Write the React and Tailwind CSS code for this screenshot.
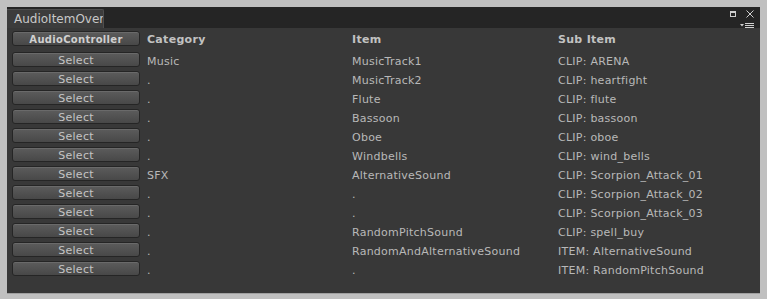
import React from "react";

const rows = [
  ["Music", "MusicTrack1", "CLIP: ARENA"],
  [".", "MusicTrack2", "CLIP: heartfight"],
  [".", "Flute", "CLIP: flute"],
  [".", "Bassoon", "CLIP: bassoon"],
  [".", "Oboe", "CLIP: oboe"],
  [".", "Windbells", "CLIP: wind_bells"],
  ["SFX", "AlternativeSound", "CLIP: Scorpion_Attack_01"],
  [".", ".", "CLIP: Scorpion_Attack_02"],
  [".", ".", "CLIP: Scorpion_Attack_03"],
  [".", "RandomPitchSound", "CLIP: spell_buy"],
  [".", "RandomAndAlternativeSound", "ITEM: AlternativeSound"],
  [".", ".", "ITEM: RandomPitchSound"],
];

function Btn({ children, bold }) {
  return (
    <div
      className={`self-start w-[128px] h-[15px] flex items-center justify-center rounded-[3px] border border-[#252525] bg-gradient-to-b from-[#5c5c5c] to-[#484848] shadow-[inset_0_1px_0_#6a6a6a] leading-none tracking-[0.3px] pt-[2px] ${
        bold ? "font-bold text-[10px] text-[#d0d0d0]" : "text-[11px] text-[#c4c4c4] -mt-[1px]"
      }`}
    >
      {children}
    </div>
  );
}

const grid = "h-[19px] grid grid-cols-[128px_198px_199px_1fr] gap-x-[7px] items-center";
const cell = "text-[11px] text-[#b8b8b8] whitespace-nowrap tracking-[0.25px]";
const head = "text-[11px] font-bold text-[#c2c2c2] tracking-[0.3px]";

export default function App() {
  return (
    <div
      className="w-[767px] h-[299px] bg-[#c0c0c0] pt-[7px] pl-[7px] pr-[7px] pb-[5px] flex flex-col"
      style={{ fontFamily: '"DejaVu Sans", Verdana, sans-serif' }}
    >
      <div className="flex-1 flex flex-col bg-[#383838] border-b border-[#a0a0a0]">
        <div className="h-[21px] bg-[#252525] flex items-end relative">
          <div className="w-[97px] h-[19px] bg-[#3c3c3c] border-t border-r border-[#4e4e4e] rounded-tr-[2px] flex items-center pl-[7px] overflow-hidden">
            <span className="text-[12px] text-[#c8c8c8] whitespace-nowrap leading-none">
              AudioItemOver
            </span>
          </div>
          <div className="absolute right-[6px] top-[3px] flex flex-col items-end">
            <div className="flex items-center gap-[10px]">
              <svg width="6" height="6" viewBox="0 0 6 6">
                <rect x="0.5" y="0.5" width="5" height="5" fill="none" stroke="#cfcfcf" strokeWidth="1" />
                <rect x="0" y="0" width="6" height="2" fill="#cfcfcf" />
              </svg>
              <svg width="8" height="8" viewBox="0 0 8 8">
                <path d="M0.5 0.5L7.5 7.5M7.5 0.5L0.5 7.5" stroke="#cfcfcf" strokeWidth="1" />
              </svg>
            </div>
            <svg width="14" height="5" viewBox="0 0 14 5" className="mt-[5px]">
              <path d="M0 1h4l-2 2.5z" fill="#cfcfcf" />
              <rect x="5" y="0" width="9" height="1" fill="#cfcfcf" />
              <rect x="5" y="2" width="9" height="1" fill="#cfcfcf" />
              <rect x="5" y="4" width="9" height="1" fill="#cfcfcf" />
            </svg>
          </div>
        </div>
        <div className="pl-[5px] pt-[3px] flex flex-col">
          <div className={`${grid} mb-[3px]`}>
            <Btn bold>AudioController</Btn>
            <div className={head}>Category</div>
            <div className={head}>Item</div>
            <div className={head}>Sub Item</div>
          </div>
          {rows.map((r, i) => (
            <div key={i} className={grid}>
              <Btn>Select</Btn>
              <div className={cell}>{r[0]}</div>
              <div className={cell}>{r[1]}</div>
              <div className={cell}>{r[2]}</div>
            </div>
          ))}
        </div>
      </div>
    </div>
  );
}
